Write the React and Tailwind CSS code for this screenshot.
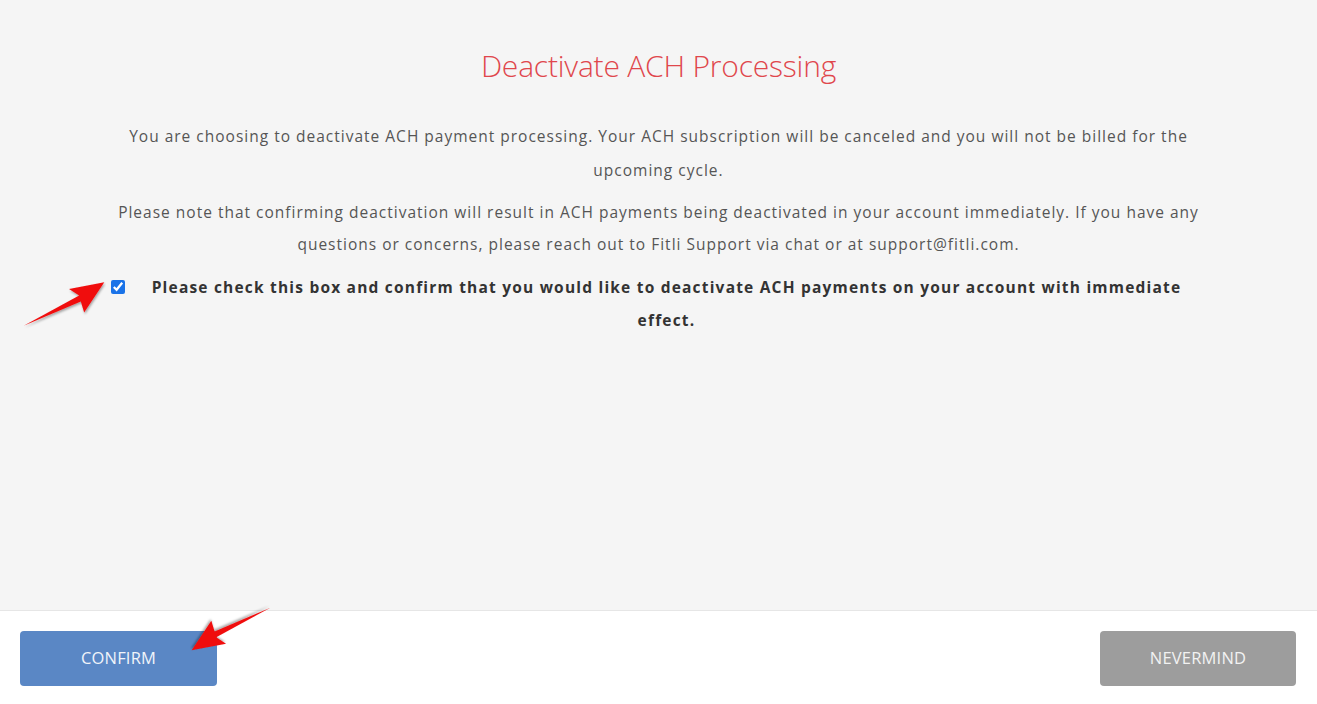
import React from 'react';

const Arrow = ({ className, id }) => (
  <svg className={className} viewBox="0 0 100 60" fill="none">
    <defs>
      <filter id={id} x="-20%" y="-20%" width="140%" height="140%">
        <feDropShadow dx="1" dy="2" stdDeviation="1.5" floodColor="#000" floodOpacity="0.35" />
      </filter>
    </defs>
    <path d="M2 56 L68 20 L56 12 L98 4 L74 40 L70 27 Z" fill="#f01010" filter={`url(#${id})`} />
  </svg>
);

export default function App() {
  const [checked, setChecked] = React.useState(true);

  return (
    <div
      className="relative w-[1317px] h-[704px] flex flex-col bg-white overflow-hidden"
      style={{ fontFamily: '"Open Sans", "Noto Sans", Arial, sans-serif' }}
    >
      <section className="h-[611px] bg-[#f5f5f5] border-b border-[#e6e6e6] flex flex-col items-center pt-[46px]">
        <h1 className="text-[30px] leading-[40px] font-light text-[#e0474c] tracking-[-0.2px]">
          Deactivate ACH Processing
        </h1>
        <div className="w-[1100px] mt-[33px] text-center text-[15.5px] text-[#555] tracking-[1px]">
          <p className="leading-[34px]">
            You are choosing to deactivate ACH payment processing. Your ACH subscription will be canceled and you will not be billed for the upcoming cycle.
          </p>
          <p className="leading-[32px] mt-[9px]">
            Please note that confirming deactivation will result in ACH payments being deactivated in your account immediately. If you have any questions or concerns, please reach out to Fitli Support via chat or at support@fitli.com.
          </p>
          <label className="flex items-start mt-[11px] cursor-pointer">
            <input
              type="checkbox"
              checked={checked}
              onChange={(e) => setChecked(e.target.checked)}
              className="w-[14px] h-[14px] mt-[9px] ml-[2px] accent-[#1a73e8] shrink-0"
            />
            <span className="flex-1 px-[26px] leading-[33px] font-bold text-[#333] text-[15.5px] tracking-[1.2px]">
              Please check this box and confirm that you would like to deactivate ACH payments on your account with immediate effect.
            </span>
          </label>
        </div>
      </section>

      <footer className="flex-1 flex justify-between items-start pt-[20px] pl-[20px] pr-[21px]">
        <button className="w-[197px] h-[55px] rounded-[4px] bg-[#5a87c5] text-[#f0f4fa] text-[16.5px] tracking-[0.2px]">
          CONFIRM
        </button>
        <button className="w-[196px] h-[55px] rounded-[4px] bg-[#9d9d9d] text-[#f2f2f2] text-[16.5px] tracking-[0.2px]">
          NEVERMIND
        </button>
      </footer>

      <Arrow id="arrA" className="absolute left-[22px] top-[278px] w-[84px] h-[52px]" />
      <Arrow id="arrB" className="absolute left-[190px] top-[604px] w-[82px] h-[50px] rotate-180" />
    </div>
  );
}
